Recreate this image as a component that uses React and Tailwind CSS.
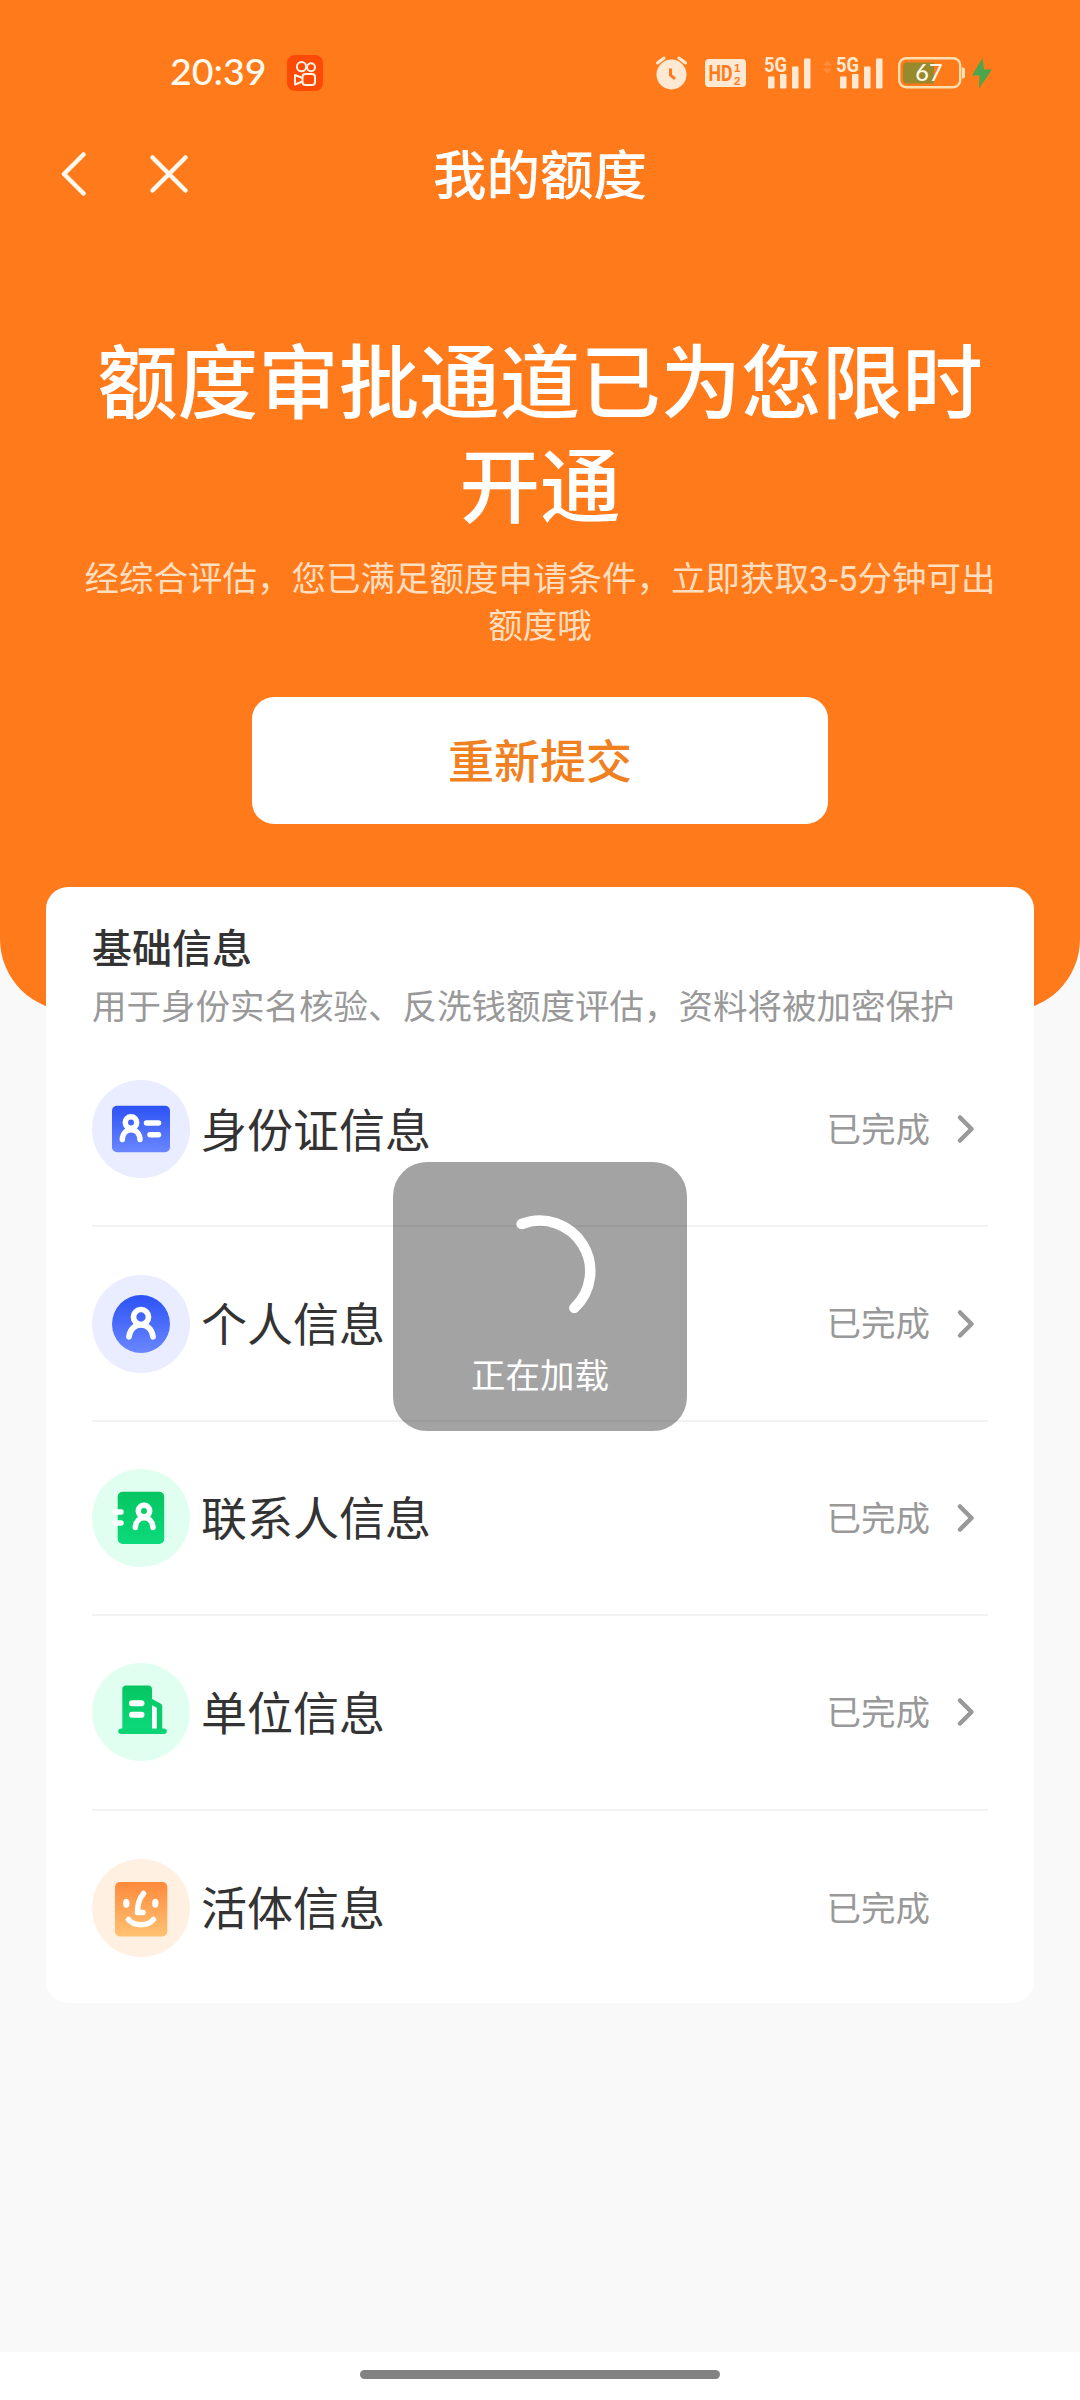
import React from "react";

const StatusBar = () => (
  <div className="flex h-36 items-center justify-between pt-px pr-[88px] pl-[170px]">
    <div className="flex items-center gap-[21px]">
      <span className="mb-[3px] font-['Lato'] text-[37.500px] leading-none font-medium text-[#fffaf0]">
        20:39
      </span>
      <svg width="36" height="36" viewBox="0 0 36 36" fill="none" stroke="#fff3e6" strokeWidth="2">
        <rect width="36" height="36" rx="8" fill="#ff4a05" stroke="none" />
        <circle cx="14.500" cy="11.700" r="4.600" />
        <circle cx="24" cy="12.200" r="4" />
        <rect x="15.500" y="19" width="12.500" height="11" rx="3" />
        <path d="M15.500 23l-7.500-3v9.500l7.500-3" strokeLinejoin="round" />
      </svg>
    </div>
    <div className="flex items-center">
      <svg width="31" height="34" viewBox="0 0 31 34" fill="none">
        <circle cx="15.500" cy="18.500" r="15" fill="#ffe9d2" />
        <path d="M1.500 7l6.500-5M29.500 7L23 2" stroke="#ffe9d2" strokeWidth="3" strokeLinecap="round" />
        <path d="M14.500 12.500v6.500l4.500 4" stroke="#ff7a1a" strokeWidth="3" />
      </svg>
      <svg className="ml-[18px]" width="41" height="28" viewBox="0 0 41 28" fill="#ff7a1a">
        <rect width="41" height="28" rx="4" fill="#ffe9d2" />
        <text x="3.500" y="22" fontSize="22.500" fontWeight="700" fontFamily="Roboto, sans-serif" textLength="24" lengthAdjust="spacingAndGlyphs">
          HD
        </text>
        <text x="29" y="13" fontSize="11.500" fontWeight="700" fontFamily="Liberation Sans, sans-serif">
          1
        </text>
        <text x="29" y="25.500" fontSize="11.500" fontWeight="700" fontFamily="Liberation Sans, sans-serif">
          2
        </text>
      </svg>
      <Signal className="-mt-[5px] ml-[18px]" />
      <svg className="-mt-3 ml-[12px]" width="9" height="14" viewBox="0 0 9 14" fill="#ff8c38">
        <path d="M0 5.500L4.500 0 9 5.500zM0 8.500L4.500 14 9 8.500z" />
      </svg>
      <Signal className="-mt-[5px] ml-[4px]" />
      <svg className="ml-[15px]" width="68" height="32" viewBox="0 0 68 32">
        <rect x="1.200" y="1.200" width="61" height="29" rx="7" fill="none" stroke="#ffe0b0" strokeWidth="2.400" />
        <path d="M9 5.500h27v21H9a4 4 0 0 1-4-4v-13a4 4 0 0 1 4-4z" fill="#978a2c" />
        <path d="M64 10.500h1a2 2 0 0 1 2 2v7a2 2 0 0 1-2 2h-1z" fill="#ffe0b0" />
        <text x="31" y="24" textAnchor="middle" fontSize="23.500" fontWeight="500" fontFamily="Lato, sans-serif" fill="#fff8e8">
          67
        </text>
      </svg>
      <svg className="ml-[6px]" width="20" height="32" viewBox="0 0 20 32" fill="#4ba64c">
        <path d="M10.500 1L0 18.500h7.500L7 31.500 20 12.500h-8z" />
      </svg>
    </div>
  </div>
);

const Signal = ({ className }) => (
  <svg className={className} width="47" height="38" viewBox="0 -5 47 38" fill="#ffe9d2">
    <text x="0" y="15.500" fontSize="20" fontWeight="700" fontFamily="Roboto, sans-serif" textLength="23" lengthAdjust="spacingAndGlyphs">
      5G
    </text>
    <rect x="4" y="20.500" width="6.500" height="12" rx="1" />
    <rect x="16" y="18" width="6.500" height="14.500" rx="1" />
    <rect x="28" y="10.500" width="6.500" height="22" rx="1" />
    <rect x="40" y="2.500" width="6.500" height="30" rx="1" />
  </svg>
);

const IdIcon = () => (
  <svg width="98" height="98" viewBox="0 0 98 98" fill="none" stroke="#fff" strokeWidth="5.500" strokeLinecap="round">
    <defs>
      <linearGradient id="blue" x1="0" y1="0" x2="0" y2="1">
        <stop offset="0" stopColor="#2c52f5" />
        <stop offset="1" stopColor="#6a87ff" />
      </linearGradient>
    </defs>
    <circle cx="49" cy="49" r="49" fill="#e9edff" stroke="none" />
    <rect x="20" y="25.700" width="58" height="46.500" rx="5" fill="url(#blue)" stroke="none" />
    <circle cx="39" cy="42.500" r="5.700" />
    <path d="M30.300 59.500c.8-13 16.900-13 17.700 0" />
    <path d="M54.500 43h12M58 54.700h8.500" />
  </svg>
);

const PersonIcon = () => (
  <svg width="98" height="98" viewBox="0 0 98 98" fill="none" stroke="#fff" strokeWidth="5.700" strokeLinecap="round">
    <circle cx="49" cy="49" r="49" fill="#e9edff" stroke="none" />
    <circle cx="49" cy="49" r="29" fill="url(#blue)" stroke="none" />
    <circle cx="49" cy="42" r="7.500" />
    <path d="M37 61.800c1.500-16 22.500-16 24 0" />
  </svg>
);

const ContactIcon = () => (
  <svg width="98" height="98" viewBox="0 0 98 98" fill="none" stroke="#fff" strokeWidth="5.500" strokeLinecap="round">
    <defs>
      <linearGradient id="green" x1="0" y1="0" x2="0" y2="1">
        <stop offset="0" stopColor="#06c561" />
        <stop offset="1" stopColor="#0cda7c" />
      </linearGradient>
    </defs>
    <circle cx="49" cy="49" r="49" fill="#e1fff0" stroke="none" />
    <rect x="25.700" y="22.700" width="46.500" height="52.300" rx="5" fill="url(#green)" stroke="none" />
    <circle cx="52" cy="42" r="5.700" />
    <path d="M43.300 58.500c.8-13 16.900-13 17.700 0" />
    <path d="M23 43h6M23 54h6" />
  </svg>
);

const BuildingIcon = () => (
  <svg width="98" height="98" viewBox="0 0 98 98" fill="none">
    <circle cx="49" cy="49" r="49" fill="#e1fff0" />
    <rect x="59" y="42" width="7" height="24" fill="#fff" />
    <path d="M30.300 68V26.500a4 4 0 0 1 4-4H56a4 4 0 0 1 4 4V68z" fill="url(#green)" />
    <path d="M58 38l9.500 5.200V67" stroke="#0acc6c" strokeWidth="5.500" strokeLinejoin="round" />
    <path d="M29 68.300h43" stroke="#0bd475" strokeWidth="5.500" strokeLinecap="round" />
    <path d="M40 40.300h9.500M40 51.700h9.500" stroke="#fff" strokeWidth="6" strokeLinecap="round" />
  </svg>
);

const FaceIcon = () => (
  <svg width="98" height="98" viewBox="0 0 98 98" fill="none">
    <defs>
      <linearGradient id="orange" x1="0" y1="0" x2="0" y2="1">
        <stop offset="0" stopColor="#ff8a3c" />
        <stop offset="1" stopColor="#ffc272" />
      </linearGradient>
    </defs>
    <circle cx="49" cy="49" r="49" fill="#fff0e1" />
    <rect x="23" y="23" width="52.300" height="54.500" rx="5" fill="url(#orange)" />
    <ellipse cx="34.300" cy="44.200" rx="3.200" ry="4.500" fill="#fff" />
    <ellipse cx="63.300" cy="44.200" rx="3.200" ry="4.500" fill="#fff" />
    <path
      d="M51.500 34.500c-3.500 4-6 12-6 19H51M36.500 60.500c6 7 19 7 25 0"
      stroke="#fff"
      strokeWidth="5.500"
      strokeLinecap="round"
      strokeLinejoin="round"
    />
  </svg>
);

const items = [
  { label: "身份证信息", icon: <IdIcon />, arrow: true },
  { label: "个人信息", icon: <PersonIcon />, arrow: true },
  { label: "联系人信息", icon: <ContactIcon />, arrow: true },
  { label: "单位信息", icon: <BuildingIcon />, arrow: true },
  { label: "活体信息", icon: <FaceIcon />, arrow: false },
];

function App() {
  return (
    <div className="relative flex h-[2400px] w-[1080px] flex-col bg-[#f9f9f9] font-['Roboto','Noto_Sans_CJK_SC',sans-serif]">
      {/* Header */}
      <div className="h-[1011px] shrink-0 rounded-b-[72px] bg-[#ff7a1a] text-white">
        <StatusBar />
        <div className="grid h-[60px] grid-cols-3 items-center">
          <div className="flex items-center gap-[62px] pl-[60px]">
            <svg width="27" height="44" viewBox="0 0 27 44" fill="none" stroke="#fff8ee" strokeWidth="4.500" strokeLinecap="round" strokeLinejoin="round">
              <path d="M23.500 2.500L4 22l19.500 19.500" />
            </svg>
            <svg width="40" height="40" viewBox="0 0 40 40" fill="none" stroke="#fff8ee" strokeWidth="4.500" strokeLinecap="round">
              <path d="M3.500 3.500l33 33M36.500 3.500l-33 33" />
            </svg>
          </div>
          <h1 className="pt-[5px] text-center text-[53.500px] leading-none font-medium">我的额度</h1>
        </div>

        <div className="mt-[129px] flex flex-col items-center text-center">
          <h2 className="w-[900px] text-[80.500px] leading-[104px] font-medium">
            额度审批通道已为您限时开通
          </h2>
          <p className="mt-[15px] w-[920px] text-[34.500px] leading-[47px] text-[#ffdfc0]">
            经综合评估，您已满足额度申请条件，立即获取3-5分钟可出额度哦
          </p>
          <button className="mt-[47px] h-[127px] w-[576px] rounded-[22px] bg-white pt-[3px] text-[46px] font-medium text-[#f08020]">
            重新提交
          </button>
        </div>
      </div>

      {/* Info card */}
      <div className="mx-[46px] -mt-[124px] h-[1116px] shrink-0 rounded-[22px] bg-white px-[46px] pt-[38px]">
        <h3 className="text-[40px] leading-[50px] font-medium text-[#333]">基础信息</h3>
        <p className="mt-[8px] text-[34.500px] leading-[48px] whitespace-nowrap text-[#999]">
          用于身份实名核验、反洗钱额度评估，资料将被加密保护
        </p>
        <div className="mt-[2px] divide-y-2 divide-[#f2f2f2]">
          {items.map((item) => (
            <div key={item.label} className="flex h-[194.400px] items-center">
              {item.icon}
              <span className="ml-[11px] pt-[3px] text-[46px] leading-none text-[#333]">{item.label}</span>
              <span className="ml-auto pt-[2px] text-[34.500px] leading-none text-[#999]">已完成</span>
              <div className="ml-[26px] w-[32px]">
                {item.arrow && (
                  <svg width="20" height="30" viewBox="0 0 20 30" fill="none" stroke="#999" strokeWidth="4.500" strokeLinecap="round" strokeLinejoin="round">
                    <path d="M4 3.500L15.500 15 4 26.500" />
                  </svg>
                )}
              </div>
            </div>
          ))}
        </div>
      </div>

      {/* Navigation bar */}
      <div className="mt-auto flex h-12 justify-center bg-white pt-[18px]">
        <div className="h-[9px] w-[360px] rounded-full bg-[#828282]"></div>
      </div>

      {/* Loading toast */}
      <div className="absolute top-[1162px] left-[393px] flex h-[269px] w-[294px] flex-col items-center rounded-[34px] bg-black/36 pt-[49px] text-white">
        <svg width="120" height="120" viewBox="-60 -60 120 120" fill="none" stroke="#fff" strokeWidth="10.500" strokeLinecap="round">
          <path d="M-18.300 -47A50.500 50.500 0 0 1 34.300 37" />
        </svg>
        <span className="mt-[28px] text-[34.500px] leading-none">正在加载</span>
      </div>
    </div>
  );
}

export default App;
